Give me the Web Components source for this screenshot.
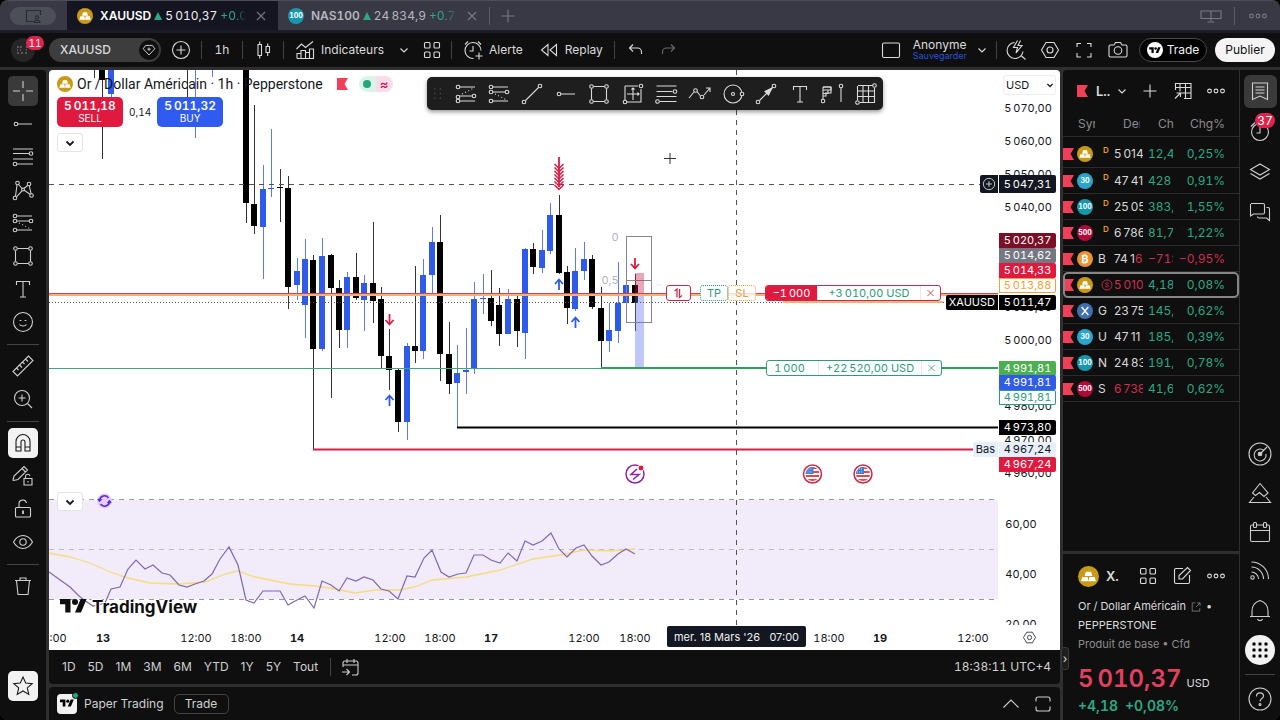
<!DOCTYPE html>
<html lang="fr">
<head>
<meta charset="utf-8">
<title>XAUUSD – TradingView</title>
<style>
  html, body { margin: 0; height: 100%; background: #000; }
  body { font-family: Inter, "Liberation Sans", sans-serif; font-variant-numeric: tabular-nums; color: #dbdbdb; font-size: 12px; line-height: 16px; }
</style>
</head>
<body>
<tv-app></tv-app>
<script>
const BASE = `<style>
  :host { box-sizing: border-box; display: block; }
  *, *::before, *::after { box-sizing: border-box; }
  button, select, input { font: inherit; font-variant-numeric: inherit; color: inherit; background: none; border: 0; padding: 0; margin: 0; }
  button { display: inline-flex; align-items: center; justify-content: center; flex: none; white-space: nowrap; }
  a { color: inherit; text-decoration: none; }
  .sep { flex: none; width: 1px; height: 18px; background: #434343; }
</style>`;
const define = (name, html, init) => {
  const tpl = document.createElement('template');
  tpl.innerHTML = BASE + html;
  customElements.define(name, class extends HTMLElement {
    connectedCallback() {
      if (this.shadowRoot) return;
      this.attachShadow({ mode: 'open' }).append(tpl.content.cloneNode(true));
      if (init) init.call(this, this.shadowRoot);
    }
  });
};
const o = (x, y, r = 1.8) => `<circle cx="${x}" cy="${y}" r="${r}"/>`;
const p = d => `<path d="${d}"/>`;
const ICONS = {
  cross: p('M12 2v7M12 15v7M2 12h7M15 12h7'),
  hray: o(5, 12) + p('M7 12h14'),
  fibs: p('M2 4h20M2 8.5h16M2 14h20M6 19h16') + o(20, 8.5) + o(4, 19),
  pattern: o(4, 20) + o(6.5, 5) + o(18, 6) + o(20.5, 17.5) + o(12, 11.5, 1.4) + p('M4.5 18L6 7M7.5 6.5L11 10.5M13 10.5l3.500-3M18.300 8l1.800 7.800M5.500 18.800l5.500-6M13.200 12.300l5.800 4'),
  proj: o(4, 5) + o(4, 10) + o(20, 10) + o(4, 19) + p('M6 5h15M6 10h12M6 19h15') + '<path d="M8 12l12 6" stroke-dasharray="1 2.500"/>',
  proj2: o(4, 5) + o(4, 15) + o(20, 14) + o(4, 19) + p('M6 5h15M6 14h12M6 19h15') + '<path d="M8 12l12-6" stroke-dasharray="1 2.500"/>',
  rect: o(4.500, 4.500) + o(19.500, 4.500) + o(4.500, 19.500) + o(19.500, 19.500) + p('M6.500 4.500h11M6.500 19.500h11M4.500 6.500v11M19.500 6.500v11'),
  text: p('M5.500 8V4.500h13V8M12 4.500v15.500M9 20h6'),
  smile: o(12, 12, 9.500) + p('M8.500 14.500c1.500 2 5.500 2 7 0') + '<path d="M9.500 10v1M14.500 10v1" stroke-width="1.800"/>',
  ruler: p('M2 17.500L17.500 2l4.500 4.500L6.500 22zM5.500 14l2 2M8.500 11l2.500 2.500M11.500 8l2 2M14.500 5l2.500 2.500'),
  zoom: o(11, 11, 7.500) + p('M16.500 16.500L21 21M11 7.500v7M7.500 11h7'),
  magnet: p('M5 20V10.500a7 7 0 0 1 14 0V20h-5v-9a2 2 0 0 0-4 0v9zM5 16h5M14 16h5'),
  penlock: p('M2 16l1-4L13 2.500l3.500 3.500L7 15.500l-4.500 1zM11 4.500L14.500 8M13 14.500h8v6.500h-8zM14.500 14.500v-2a2.300 2.300 0 0 1 4.500-.6M17 17v1.500'),
  lock: p('M5.500 10.500h13a1 1 0 0 1 1 1V19a1 1 0 0 1-1 1h-13a1 1 0 0 1-1-1v-7.500a1 1 0 0 1 1-1zM8 10.500V7a3.800 3.800 0 0 1 7.500-1') + '<path d="M12 13.500v3.500" stroke-width="1.800"/>',
  eye: p('M2.500 12C5 7.500 8.500 5.500 12 5.500s7 2 9.500 6.500c-2.500 4.500-6 6.500-9.500 6.500S5 16.500 2.500 12z') + o(12, 12, 3.200),
  trash: p('M4 6.500h16M9 6.500V4h6v2.500M5.500 6.500l1.500 14h10l1.500-14'),
  star: p('M12 3l2.700 6 6.500.6-4.900 4.300 1.500 6.500L12 17l-5.800 3.400 1.500-6.500-4.900-4.300 6.500-.6z'),
  line: o(4, 20) + o(20, 4) + p('M5.500 18.500l13-13'),
  range: p('M4 4h13M4 4v14M6 20h14V7M12 6v12M6 12h12M10.500 7.500L12 6l1.500 1.500M16.500 10.500L18 12l-1.500 1.500') + o(20, 4) + o(4, 20),
  fib2: p('M2.500 4h20M2.500 9.500h16M2.500 14.500h20M6 19.500h16.500') + o(21, 9.500) + o(3.500, 19.500),
  wave: p('M2 16l5-6M10 9.500l3 4M17 13l6-7M19 6h4v4') + o(8.500, 8.500) + o(15, 15),
  circ: o(12, 12, 9) + o(12, 12, 1.500) + '<circle cx="21" cy="12" r="1.800" fill="#1e1e1e"/>',
  arrow: o(4, 20) + o(20, 4) + p('M5.500 18.500L18.500 5.500') + '<path d="M18 6l-7 3.500 3.500 3.500z" fill="currentColor"/>',
  profile: p('M2 5v12.500M2 5h8v3H2M2 8h5v3.500H2M2 11.500h3V14H2') + p('M2 5h8M10 5v6H4') + o(2, 19) + p('M20 6v14') + o(20, 4),
  table: p('M4 3.500h14.500M3.500 4v14M6 20.500h14.500V6M3.500 9h17M3.500 14.500h17M9 3.500v17M14.500 3.500v17') + o(20.500, 3.500) + o(3.500, 20.500),
  plusc: o(12, 12, 8.500) + p('M12 7.500v9M7.500 12h9'),
  candle: p('M7 6.500h3.500v11H7zM8.700 3.500v3M8.700 17.500v3M15 8.500h3.500v6H15zM16.700 5.500v3M16.700 14.500V18'),
  indic: p('M4 20.500v-5h4v5M8 20.500v-8h4.500v8M12.500 20.500v-6h4v6M16.500 20.500V11h4v9.500zM4 20.500h16M3.500 11l5-5 4 3.500L20 3.500'),
  chev: p('M8.500 10.500l3.500 3.500 3.500-3.500'),
  chevb: '<path d="M8.500 10.500l3.500 3.500 3.500-3.500" stroke-width="1.800"/>',
  up: p('M4.500 15.500L12 8l7.500 7.500'),
  grid: '<rect x="4.500" y="4.500" width="5.500" height="5.500" rx="1"/><rect x="14" y="4.500" width="5.500" height="5.500" rx="1"/><rect x="4.500" y="14" width="5.500" height="5.500" rx="1"/><rect x="14" y="14" width="5.500" height="5.500" rx="1"/>',
  alarm: p('M20 12.500a8 8 0 1 0-7.500 8M12 8v5H8.500M4 6.500l3-3M17 3.500l3 3M18 14.500v7M14.500 18h7'),
  clock: p('M3 7.500l4-4M17 3.500l4 4M12 8v6H8.500') + o(12, 13, 8.500),
  replay: p('M11 6.500v11L4.500 12zM19.500 6.500v11L13 12z'),
  undo: p('M10 6.500L6.500 10l3.500 3.500M6.500 10h8a4 4 0 0 1 4 4v2'),
  redo: p('M14 6.500l3.500 3.500-3.500 3.500M17.500 10h-8a4 4 0 0 0-4 4v2'),
  layout: '<rect x="3.500" y="5" width="17" height="14.500" rx="1.500"/>',
  flash: p('M10.500 4.500a8 8 0 1 0 8.500 9M17 17.500l4.500 4M13.500 2.500l-4 7h4L12 15l6-7.500h-4l2.500-5'),
  hex: p('M8 4.500h8l4.500 7.500-4.500 7.500H8L3.500 12z') + o(12, 12, 3),
  full: p('M5 9V5.500h4M15 5.500h4V9M19 15v4h-4M9 19H5v-4'),
  maxi: p('M5 9.500V7a2 2 0 0 1 2-2h10a2 2 0 0 1 2 2v2.500M5 14.500V17a2 2 0 0 0 2 2h10a2 2 0 0 0 2-2v-2.500'),
  cam: p('M4.500 7H8l1.500-2.500h5L16 7h3.500A1.500 1.500 0 0 1 21 8.500v9a1.500 1.500 0 0 1-1.500 1.500h-15A1.500 1.500 0 0 1 3 17.500v-9A1.500 1.500 0 0 1 4.500 7z') + o(12, 12.500, 3.800),
  gem: p('M8 6.500h8l3 4L12 18l-7-7.500zM12 9v4M10 11h4'),
  x: p('M8 8l8 8M16 8l-8 8'),
  plus: p('M12 5.500v13M5.500 12h13'),
  dots: o(5.500, 12, 1.900) + o(12, 12, 1.900) + o(18.500, 12, 1.900),
  screen: p('M2 7h20v7.500H2zM12 7v10M8.500 18h7'),
  window: p('M12 17.500H5.500v-11h14V11M13 18.500c0-3 6-3 6 0z') + o(16, 13.500, 1.600),
  addtab: p('M4.500 11V4.500H20v15h-7M4.500 8.500H20M9 4.500v8M14.500 4.500v15M9 14H20M4 19.500l5-5M5.500 14H9.500v4'),
  note: p('M4.500 4h15v16.500L12 17l-7.500 3.500zM7.500 8h9M7.500 11h9M7.500 14h9'),
  layers: p('M12 5l9.500 5.500L12 16 2.500 10.500zM2.500 14.500L12 20l9.500-5.500'),
  chat: p('M3 4.500h12a1.500 1.500 0 0 1 1.500 1.500v7.500a1.500 1.500 0 0 1-1.500 1.500H5.500L2.500 17V5M18.500 8.500h1.500a1.500 1.500 0 0 1 1.500 1.500v11.500L18.500 19H11a1.500 1.500 0 0 1-1.500-1.500'),
  radar: o(12, 12, 11) + p('M16 8.500A6 6 0 1 0 18 12M13 11l6-6') + '<circle cx="12" cy="12" r="1.800" fill="currentColor"/>',
  idea: p('M12 2.500l8 9.500-4 3.500-4.500-4-4 3L4.500 12zM6 16l-4.500 5.500h21L18 16'),
  cal: p('M3.500 5H20a1.500 1.500 0 0 1 1.500 1.500V20a1.500 1.500 0 0 1-1.500 1.500H4A1.500 1.500 0 0 1 2.500 20V6.500A1.500 1.500 0 0 1 4 5M2.500 10.500h19') + '<rect x="5.500" y="2.500" width="3" height="5" rx="1" fill="#0f0f0f"/><rect x="15.500" y="2.500" width="3" height="5" rx="1" fill="#0f0f0f"/>',
  goto: p('M5 12V8a2 2 0 0 1 2-2h11a2 2 0 0 1 2 2v10a2 2 0 0 1-2 2h-4M5 10h15M9 4v4M16 4v4M4 17h7M8.500 14l3 3-3 3'),
  rss: o(4.500, 18.500, 1.700) + p('M3.500 13a7 7 0 0 1 7 7M3.500 8a12 12 0 0 1 12 12M3.500 3a17 17 0 0 1 17 17'),
  bell: p('M4 18V13c0-5.500 3.500-9 8-10.500 4.500 1.500 8 5 8 10.500v5M2 18.500h20M9.500 21a2.700 2.700 0 0 0 5 0'),
  help: o(12, 12, 11) + p('M8.500 9.500c0-5 7-4.500 7-.5 0 2.500-3.500 2.500-3.500 5.500') + o(12, 17.500, 1),
  apps: [6, 12, 18].map(y => [6, 12, 18].map(x => `<rect x="${x - 1.500}" y="${y - 1.500}" width="3" height="3" rx=".6" fill="currentColor" stroke="none"/>`).join('')).join(''),
  edit: p('M13 4.500H6A1.500 1.500 0 0 0 4.500 6v12A1.500 1.500 0 0 0 6 19.500h12a1.500 1.500 0 0 0 1.500-1.500v-7M9 15v-3.500l8.500-8 3 3-8 8.500z'),
  ext: p('M11 5H5.500v14h13v-5M14 5h5v5M19 5l-7 7'),
  stop: '<g stroke-width="1.800">' + o(12, 12, 10) + '<path d="M15 9c-1-2-6-2-6 .5s6 2 6 4.500-5 2.500-6.500.5"/></g>',
  avatar: '<path d="M6 9h2M9 9h2M15 9h2M6 12h1M9 12h1M15 12h1M6 15h2M10 15h2M14 15h2" stroke="#6c6c6c" stroke-width="1.500"/>',
  grip: [7, 12, 17].map(y => [8, 14].map(x => `<rect x="${x}" y="${y - 1}" width="1" height="1" fill="#777" stroke="none"/>`).join('')).join('')
};
define('tv-icon', `<style>:host { display: inline-block; flex: none; width: 24px; height: 24px; } svg { display: block; width: 100%; height: 100%; fill: none; stroke: currentColor; stroke-width: 1.1; }</style><svg viewBox="0 0 24 24" aria-hidden="true"></svg>`,
  function (r) { r.querySelector('svg').innerHTML = ICONS[this.getAttribute('name')]; });

define('tv-logo', `<style>:host { display: inline-block; flex: none; width: 18px; height: 14px; } svg { display: block; width: 100%; height: 100%; fill: currentColor; }</style>
<svg viewBox="0 0 36 28" aria-hidden="true"><path d="M14 22H7V11H0V4h14v18zM28 22h-8l7.500-18h8L28 22z"/><circle cx="20" cy="8" r="4"/></svg>`);

const BADGE = {
  gold: ['#c99a15', '<path d="M9 6.500h6l1.500 5h-9zM5 12.500h6l1 5H3.500zM13 12.500h6l1.500 5H12z" fill="#fff"/>'],
  btc: ['#ec9331', '₿'], gbp: ['#3f6fb0', '<path d="M7 6l10 12M17 6L7 18" stroke="#fff" stroke-width="2"/>'],
  30: ['#2ca5cc', '30'], 100: ['#1797ae', '100'], 500: ['#b1093a', '500']
};
define('sym-badge', `<style>
  :host { display: inline-flex; flex: none; align-items: center; justify-content: center; width: 16px; height: 16px; border-radius: 50%; color: #fff; font-size: 7px; line-height: 8px; font-weight: 700; }
  :host([kind=btc]) { font-size: 11px; }
  span { display: flex; align-items: center; justify-content: center; width: 100%; height: 100%; }
  svg { display: block; width: 100%; height: 100%; }
</style><span></span>`, function (r) {
  const [bg, art] = BADGE[this.getAttribute('kind')];
  this.style.background = bg;
  r.querySelector('span').innerHTML = art[0] === '<' ? `<svg viewBox="0 0 24 24" aria-hidden="true">${art}</svg>` : art;
});
define('red-flag', `<style>:host { display: inline-block; flex: none; width: 11px; height: 12px; } svg { display: block; }</style><svg width="11" height="12" aria-hidden="true"><path d="M0 0h11L7.500 6 11 12H0z" fill="#f23f57"/></svg>`);

/* Window tabs */
define('tv-tabs', `<style>
  :host { display: flex; align-items: stretch; height: 33px; background: #383944; border-top: 1px solid #4b4d59; border-bottom: 3px solid #1b1c28; border-radius: 8px 8px 0 0; padding-right: 10px; }
  .home { align-self: center; width: 46px; height: 18px; border-radius: 9px; background: #4c4e58; color: #292a34; margin: 0 11px 0 10px; }
  .tab { display: flex; align-items: center; gap: 3px; width: 211px; padding-left: 10px; color: #b5b6bd; white-space: nowrap; }
  .tab.on { background: #141520; color: #f0f0f0; }
  .tab b { font-weight: 600; margin-left: 4px; }
  .tab.on b { color: #fff; }
  .tab i { width: 0; height: 0; border: 4px solid transparent; border-top: 0; border-bottom: 8px solid #2ba987; }
  .chg { color: #2ba987; width: 35px; overflow: hidden; -webkit-mask-image: linear-gradient(90deg, #000 60%, transparent); mask-image: linear-gradient(90deg, #000 60%, transparent); }
  .x, .end { color: #777986; }
  .x { margin: 0 5px 0 auto; }
  .sep { align-self: center; background: #5a5c68; }
  .end { display: flex; align-items: center; gap: 11px; margin-left: auto; }
  .add { color: #777986; margin-left: 6px; }
</style>
<button class="home" aria-label="Fenêtres"><tv-icon name="window"></tv-icon></button>
<div class="tab on"><sym-badge kind="gold"></sym-badge><b>XAUUSD</b><i></i><span>5\u2009010,37</span><span class="chg">+0.08</span><button class="x" aria-label="Fermer"><tv-icon name="x"></tv-icon></button></div>
<div class="tab"><sym-badge kind="100"></sym-badge><b>NAS100</b><i></i><span>24\u2009834,9</span><span class="chg">+0.78</span><button class="x" aria-label="Fermer"><tv-icon name="x"></tv-icon></button></div>
<span class="sep"></span><button class="add" aria-label="Nouvel onglet"><tv-icon name="plus"></tv-icon></button>
<div class="end"><tv-icon name="screen"></tv-icon><span class="sep"></span><tv-icon name="dots"></tv-icon></div>`);

/* Top toolbar */
define('tv-topbar', `<style>
  :host { display: flex; align-items: center; height: 34px; background: #0f0f0f; padding-right: 5px; }
  button { height: 32px; }
  .me { position: relative; width: 46px; margin-right: 3px; }
  .me span { display: flex; align-items: center; justify-content: center; width: 24px; height: 24px; border-radius: 50%; background: #262626; }
  .me em { position: absolute; top: 2px; left: 26px; min-width: 18px; height: 14px; border-radius: 7px; background: #e0234a; color: #fff; font-style: normal; font-size: 10px; line-height: 14px; }
  .sym { width: 112px; height: 24px; border-radius: 12px; background: #3d3d3d; justify-content: space-between; padding: 0 2px 0 11px; font-weight: 500; }
  .sym span { width: 20px; height: 20px; border-radius: 50%; background: #0f0f0f; display: flex; align-items: center; justify-content: center; }
  .sym tv-icon { width: 20px; height: 20px; }
  .w40 { width: 40px; } .w34 { width: 34px; } .w32 { width: 32px; }
  .lab { gap: 4px; padding: 0 8px 0 6px; }
  .first { padding-left: 9px; }
  .gap { margin: 0 3px; }
  .dim { color: #6b6b6b; }
  .name { flex-direction: column; align-items: flex-start; line-height: 12px; margin: 0 3px 0 10px; }
  .name small { color: #2a51d8; font-size: 9px; line-height: 10px; }
  .right .sep { margin: 0 2px; }
  .trade { height: 24px; width: 68px; border: 1px solid #4a4a4a; border-radius: 12px; background: #000; gap: 4px; margin: 0 8px 0 4px; color: #f0f0f0; }
  .trade span { display: flex; align-items: center; justify-content: center; width: 16px; height: 16px; border-radius: 50%; background: #fff; color: #000; }
  .trade tv-logo { width: 12px; height: 9px; }
  .pub { height: 24px; width: 60px; border-radius: 12px; background: #f4f4f4; color: #0f0f0f; }
  .right { display: flex; align-items: center; margin-left: auto; }
</style>
<button class="me" aria-label="Menu"><span><tv-icon name="avatar"></tv-icon></span><em>11</em></button>
<button class="sym">XAUUSD<span><tv-icon name="gem"></tv-icon></span></button>
<button class="w40" aria-label="Comparer"><tv-icon name="plusc"></tv-icon></button><span class="sep"></span>
<button class="w40">1h</button><span class="sep"></span>
<button class="w40" aria-label="Bougies"><tv-icon name="candle"></tv-icon></button><span class="sep"></span>
<button class="lab first"><tv-icon name="indic"></tv-icon>Indicateurs</button>
<button aria-label="Favoris"><tv-icon name="chev"></tv-icon></button>
<button class="w32" aria-label="Modèles"><tv-icon name="grid"></tv-icon></button><span class="sep gap"></span>
<button class="lab"><tv-icon name="alarm"></tv-icon>Alerte</button>
<button class="lab"><tv-icon name="replay"></tv-icon>Replay</button><span class="sep gap"></span>
<button class="w34" aria-label="Annuler"><tv-icon name="undo"></tv-icon></button>
<button class="w34 dim" aria-label="Rétablir"><tv-icon name="redo"></tv-icon></button>
<div class="right">
<button aria-label="Disposition"><tv-icon name="layout"></tv-icon></button>
<button class="name"><span>Anonyme</span><small>Sauvegarder</small></button>
<button aria-label="Gérer"><tv-icon name="chev"></tv-icon></button><span class="sep"></span>
<button class="w34" aria-label="Recherche rapide"><tv-icon name="flash"></tv-icon></button>
<button class="w34" aria-label="Paramètres"><tv-icon name="hex"></tv-icon></button>
<button class="w34" aria-label="Plein écran"><tv-icon name="full"></tv-icon></button>
<button class="w34" aria-label="Capture"><tv-icon name="cam"></tv-icon></button>
<button class="trade"><span><tv-logo></tv-logo></span>Trade</button>
<button class="pub">Publier</button></div>`);

/* Left drawing tools */
define('tv-tools', `<style>
  :host { display: flex; flex-direction: column; align-items: center; background: #0f0f0f; padding: 5px 0 17px; border-radius: 0 4px 0 8px; color: #cfcfcf; }
  button { width: 30px; height: 30px; margin: 1px 0 2px; border-radius: 5px; }
  .on { background: #3a3a3a; } .lit { background: #f2f2f2; color: #1a1a1a; }
  hr { width: 32px; height: 1px; margin: 5px 0; border: 0; background: #434343; }
  .last { margin-top: auto; }
</style>
<button class="on" aria-label="Réticule"><tv-icon name="cross"></tv-icon></button><button aria-label="Lignes"><tv-icon name="hray"></tv-icon></button><button aria-label="Fibonacci"><tv-icon name="fibs"></tv-icon></button><button aria-label="Modèles"><tv-icon name="pattern"></tv-icon></button><button aria-label="Projection"><tv-icon name="proj"></tv-icon></button><button aria-label="Formes"><tv-icon name="rect"></tv-icon></button><button aria-label="Texte"><tv-icon name="text"></tv-icon></button><button aria-label="Icônes"><tv-icon name="smile"></tv-icon></button>
<hr><button aria-label="Mesure"><tv-icon name="ruler"></tv-icon></button><button aria-label="Zoom"><tv-icon name="zoom"></tv-icon></button>
<hr><button class="lit" aria-label="Aimant"><tv-icon name="magnet"></tv-icon></button><button aria-label="Mode dessin"><tv-icon name="penlock"></tv-icon></button><button aria-label="Verrouiller"><tv-icon name="lock"></tv-icon></button><button aria-label="Masquer"><tv-icon name="eye"></tv-icon></button>
<hr><button aria-label="Supprimer"><tv-icon name="trash"></tv-icon></button>
<button class="lit last" aria-label="Favoris"><tv-icon name="star"></tv-icon></button>`);

/* Floating favourites */
define('tv-favs', `<style>
  :host { display: flex; align-items: center; width: 456px; height: 33px; border-radius: 5px; background: #1e1e1e; color: #dbdbdb; box-shadow: 0 2px 4px rgba(0,0,0,.4); }
  .list { flex: 1; display: grid; grid-template-columns: repeat(13, 1fr); justify-items: center; }
  button { height: 24px; }
  tv-icon[name=grip] { width: 22px; }
</style><tv-icon name="grip"></tv-icon><div class="list"></div>`, function (r) {
  r.querySelector('.list').innerHTML = ['proj2', 'proj', 'line', 'hray', 'rect', 'range', 'fib2', 'wave', 'circ', 'arrow', 'text', 'profile', 'table']
    .map(n => `<button aria-label="Outil ${n}"><tv-icon name="${n}"></tv-icon></button>`).join('');
});

/* Price-scale label, placed at its price */
define('price-tag', `<style>
  :host { position: absolute; right: 4px; display: flex; height: 15px; line-height: 15px; font-size: 11px; color: #fff; }
  span { display: block; text-align: center; background: var(--c, #000); }
  .v { width: 57px; border-radius: 0 2px 2px 0; }
  .n { padding: 0 3px; margin-right: 1px; border-radius: 2px 0 0 2px; }
  :host([outline]) .v { background: #fff; box-shadow: inset 0 0 0 1px var(--c); color: var(--c); }
  :host([light]) { color: #131722; }
  :host([tall]) { height: 18px; line-height: 18px; }
  :host([tall]) .n { padding: 0 1px; }
  tv-icon { display: block; width: 16px; height: 18px; }
</style><span class="n"></span><span class="v"><slot></slot></span>`, function (r) {
  const n = r.querySelector('.n');
  if (this.hasAttribute('name')) n.textContent = this.getAttribute('name');
  else if (this.hasAttribute('tall')) n.innerHTML = '<tv-icon name="plusc"></tv-icon>';
  else n.remove();
});

/* Chart: [x, wickTop, bodyTop, bodyBottom, wickBottom, up] */
const CANDLES = [[94,60,60,61,78,0],[102,60,60,80,159,0],[111,60,60,94,97,1],[187,60,60,61,98,0],[195,60,60,61,138,1],[212,60,60,61,77,1],
[246,60,60,203,223,0],[254,105,204,226,234,0],[263,165,189,227,279,1],[271,129,188,189,197,1],[280,169,187,188,222,0],[288,176,188,287,309,0],[297,258,271,285,300,1],[305,239,259,305,338,1],[313,255,260,349,450,0],[322,238,256,349,351,1],[331,254,255,288,398,0],[339,280,288,330,348,0],[347,272,277,330,348,1],[356,253,277,298,300,0],[364,275,283,300,331,1],[373,222,283,301,323,0],[381,287,299,356,368,0],[389,329,356,370,390,0],[398,368,370,422,432,0],[407,343,346,422,440,1],[415,266,346,351,363,0],[423,259,275,351,359,1],[432,227,242,275,295,1],[440,215,242,354,381,0],[449,322,354,384,394,0],[457,345,373,383,427,1],[466,328,370,372,394,1],[474,282,299,368,374,1],[483,274,298,299,314,1],[491,270,298,321,326,0],[499,288,305,334,346,0],[508,289,299,334,334,1],[517,294,299,331,347,0],[525,248,249,333,359,1],[533,243,249,267,274,0],[542,230,250,268,273,1],[550,203,215,251,254,1],[559,195,215,273,274,0],[567,266,272,308,324,0],[575,248,271,309,311,1],[584,242,259,271,280,1],[592,255,259,307,309,0],[601,287,308,341,367,0],[609,303,330,341,352,1],[618,262,303,331,343,1],[626,237,285,303,322,1],[635,274,285,303,331,0]];
const RSI = '49,572 70,587 79,596 84,600 93,606 105,603 111,589 120,587 128,569 136,560 145,569 153,565 162,573 170,575 179,585 187,587 195,584 204,581 212,574 220,559 229,547 238,565 246,600 254,603 263,591 280,591 288,605 297,600 305,596 314,608 322,581 331,585 339,591 347,578 356,581 364,577 373,580 381,589 389,591 398,599 407,576 415,577 424,558 432,550 441,572 449,577 458,574 466,573 474,555 483,555 491,560 500,563 508,553 517,561 525,541 533,545 542,541 551,533 559,549 567,557 576,548 584,545 592,556 601,565 609,562 618,554 626,549 635,554';
const MA = '49,553 70,557 90,563 110,572 128,578 150,583 180,584 205,582 225,574 238,571 255,577 290,584 315,586 330,588 355,593 375,590 400,590 418,586 432,580 466,577 500,570 533,559 560,555 584,550 610,551 635,549';
const down = (x, y) => `<path d="M${x} ${y}v11m-4-5l4 4.500 4-4.500" stroke="#d81e45" stroke-width="1.800"/>`;
const upA = (x, y) => `<path d="M${x} ${y}v-11m-4 5l4-4.500 4 4.500" stroke="#2f5bea" stroke-width="1.800"/>`;
const usa = x => `<circle cx="${x}" cy="474" r="9" fill="#fff" stroke="#c92a4b" stroke-width="1.500"/><clipPath id="u${x}"><circle cx="${x}" cy="474" r="7"/></clipPath><g clip-path="url(#u${x})"><path d="M${x - 8} 468h16M${x - 8} 472h16M${x - 8} 476h16M${x - 8} 480h16" stroke="#e0474f" stroke-width="2"/><rect x="${x - 8}" y="466" width="9" height="8" fill="#3f7fd0"/><path d="M${x - 6} 469h6M${x - 6} 472h6" stroke="#fff" stroke-width="1" stroke-dasharray="1 1" opacity=".7"/></g>`;

define('tv-chart', `<style>
  :host { position: relative; display: grid; grid-template: minmax(0, 1fr) 25px / minmax(0, 1fr) 62px; background: #fff; color: #131722; border-radius: 4px 4px 0 0; overflow: hidden; }
  svg { display: block; width: 100%; height: 100%; fill: none; }
  svg text { font-size: 11px; fill: #131722; text-anchor: middle; }
  .time { grid-column: 1; }
  .bold { font-weight: 700; }
  .over { position: absolute; display: flex; align-items: center; }
  .legend { top: 6px; left: 8px; gap: 4px; font: 14px/16px Roboto, sans-serif; }
  .legend red-flag { margin-left: 10px; }
  .state { display: flex; margin-left: 7px; height: 16px; border-radius: 8px; overflow: hidden; font: 600 13px/15px Inter, sans-serif; color: #c2185b; }
  .state span { width: 17px; background: #dcf3ea; display: flex; align-items: center; justify-content: center; }
  .state span + span { background: #fbdcea; }
  .state i { width: 8px; height: 8px; border-radius: 50%; background: #22a67a; }
  .quote { top: 27px; left: 8px; gap: 6px; font-size: 10px; }
  .quote button { flex-direction: column; width: 66px; height: 30px; border-radius: 5px; background: #e0193f; color: #fff; line-height: 12px; }
  .quote button b { font-size: 12px; font-weight: 600; }
  .quote .buy { background: #2f5bf0; }
  .fold { left: 8px; width: 26px; height: 19px; border: 1px solid #e0e3eb; border-radius: 3px; background: #fff; }
  .favs { top: 7px; left: 378px; }
  .cur { top: 5px; right: 4px; width: 53px; height: 20px; }
  .cur select { width: 100%; height: 20px; padding-left: 2px; border: 1px solid #eceef3; border-radius: 3px; font-size: 11px; appearance: none; }
  .cur tv-icon { position: absolute; right: -3px; width: 18px; height: 18px; pointer-events: none; }
  .pill { height: 16px; background: #fff; border: 1px solid var(--c); border-radius: 3px; color: var(--c); font-size: 11px; line-height: 14px; overflow: hidden; }
  .pill span, .pill button { height: 14px; text-align: center; border-left: 1px solid #e8e8ea; }
  .pill :first-child { border-left: 0; width: 51px; }
  .pill span:first-child { padding-right: 6px; }
  .pill .q:first-child { padding: 0; }
  .pill span + span { width: 103px; }
  .pill button { width: 20px; }
  .pill tv-icon { width: 18px; height: 18px; }
  .short { --c: #c92a4b; top: 215px; left: 716px; }
  .short .q { background: #e0193f; color: #fff; }
  .short .p { color: #2d9c7a; }
  .long { --c: #2d9c7a; top: 290px; left: 717px; }
  .rev { --c: #c92a4b; top: 215px; left: 617px; width: 25px; justify-content: center; }
  .rev svg { width: 12px; height: 12px; }
  .tpsl { top: 215px; left: 651px; font-size: 11px; line-height: 14px; }
  .tpsl button { width: 28px; height: 16px; border: 1px dotted #2d9c7a; color: #2d9c7a; background: #fff; border-radius: 3px; }
  .tpsl button + button { border-color: #e3a13c; color: #e3a13c; background: #fffc; }
  .brand { left: 11px; bottom: 33px; gap: 5px; font-size: 17px; line-height: 20px; font-weight: 700; color: #0f0f0f; text-shadow: 0 0 2px #fff, 1px 1px 0 #fff, -1px -1px 0 #fff; }
  .brand tv-logo { width: 27px; height: 21px; }
  .when { left: 618px; bottom: 3px; height: 21px; width: 139px; justify-content: center; background: #131722; color: #eee; font-size: 11px; font-variant-numeric: normal; border-radius: 2px; white-space: pre; }
  .set { right: 22px; bottom: 0; height: 25px; } .set tv-icon { width: 17px; height: 17px; }
</style>
<svg class="plot" role="img" aria-label="Graphique en bougies XAUUSD"><g transform="translate(-49 -70)"></g></svg>
<svg class="axis" aria-label="Échelle des prix"></svg>
<svg class="time" aria-label="Échelle de temps"></svg>
<div class="over legend"><sym-badge kind="gold"></sym-badge><span>Or / Dollar Américain · 1h · Pepperstone</span><red-flag></red-flag><div class="state"><span><i></i></span><span>≈</span></div></div>
<div class="over quote"><button><b>5\u2009011,18</b>SELL</button><span>0,14</span><button class="buy"><b>5\u2009011,32</b>BUY</button></div>
<button class="over fold" style="top:63px" aria-label="Replier"><tv-icon name="chevb"></tv-icon></button>
<button class="over fold" style="top:422px" aria-label="Replier RSI"><tv-icon name="chevb"></tv-icon></button>
<div class="over cur"><select aria-label="Devise"><option>USD</option></select><tv-icon name="chevb"></tv-icon></div>
<button class="over pill rev" aria-label="Inverser"><svg viewBox="0 0 12 12" stroke="currentColor" stroke-width="1.300"><path d="M2 4l2.500-2v8.500M7 2v8.500l2.500-2"/></svg></button>
<div class="over tpsl"><button>TP</button><button>SL</button></div>
<div class="over pill short"><span class="q">−1\u2009000</span><span class="p">+3\u2009010,00 USD</span><button aria-label="Fermer"><tv-icon name="x"></tv-icon></button></div>
<div class="over pill long"><span>1\u2009000</span><span>+22\u2009520,00 USD</span><button aria-label="Annuler"><tv-icon name="x"></tv-icon></button></div>
<price-tag tall style="top:105px;--c:#131722">5\u2009047,31</price-tag>
<price-tag style="top:163px;--c:#7b0f28">5\u2009020,37</price-tag>
<price-tag style="top:178px;--c:#757883">5\u2009014,62</price-tag>
<price-tag style="top:193px;--c:#e0193f">5\u2009014,33</price-tag>
<price-tag outline style="top:208px;--c:#eca33b">5\u2009013,88</price-tag>
<price-tag name="XAUUSD" style="top:225px">5\u2009011,47</price-tag>
<price-tag style="top:291px;--c:#4caf50">4\u2009991,81</price-tag>
<price-tag style="top:305px;--c:#2f5bea">4\u2009991,81</price-tag>
<price-tag outline style="top:320px;--c:#2d9c7a">4\u2009991,81</price-tag>
<price-tag style="top:350px">4\u2009973,80</price-tag>
<price-tag light name="Bas" style="top:372px;--c:#e6effa">4\u2009967,24</price-tag>
<price-tag style="top:387px;--c:#e0193f">4\u2009967,24</price-tag>
<div class="over brand"><tv-logo></tv-logo>TradingView</div>
<div class="over when">mer. 18 Mars '26   07:00</div>
<button class="over set" aria-label="Réglages"><tv-icon name="hex"></tv-icon></button>
<tv-favs class="over favs"></tv-favs>`, function (r) {
  const W = 2400;
  const hl = (y, x, c, w = 1, dash = '') => `<path d="M${x} ${y}H${W}" stroke="${c}" stroke-width="${w}" stroke-dasharray="${dash}"/>`;
  let g = `<rect x="49" y="500" width="${W}" height="99" fill="#f2ebf9"/>`
    + hl(499.5, 49, '#9598a1', 1, '5 5') + hl(549.5, 49, '#bdb9c8', 1, '5 5') + hl(599.5, 49, '#9598a1', 1, '5 5')
    + `<polyline points="${MA}" stroke="#f5dc7c" stroke-width="1.300"/><polyline points="${RSI}" stroke="#8168b3" stroke-width="1.200"/>`;
  for (const [x, wt, bt, bb, wb, up] of CANDLES) {
    const c = up ? '#2f5bea' : '#000';
    g += `<rect x="${x}" y="${wt}" width="1" height="${wb - wt}" fill="${c}" opacity=".8"/><rect x="${x - 3}" y="${bt}" width="6" height="${Math.max(1, bb - bt)}" fill="${c}"/>`;
  }
  g += '<rect x="626.500" y="236.500" width="25" height="86" stroke="#85878f"/><path d="M627 280.500h25" stroke="#85878f"/>'
    + '<rect x="635" y="273" width="9" height="20" fill="#c9244d" opacity=".4"/><rect x="635" y="293" width="9" height="75" fill="#5b76f0" opacity=".4"/>'
    + '<text x="615" y="241" style="fill:#b2b5be">0</text><text x="610" y="284" style="fill:#b2b5be">0,5</text>'
    + hl(294.5, 49, '#f0b27a', 3) + hl(293.5, 49, '#d8405a') + hl(302.5, 49, '#555', 1, '1 2') + '<path d="M783 302h160" stroke="#f0b27a" stroke-width="2"/>' + hl(368.5, 49, '#3ba684')
    + hl(368, 601, '#2da05c', 2) + hl(427.500, 457, '#000', 2) + hl(449.500, 313, '#d81e45', 2)
    + hl(184.5, 49, '#50535e', 1, '5 5') + '<path d="M736.500 70V625" stroke="#50535e" stroke-dasharray="5 5"/>'
    + down(389.5, 314) + down(635, 258) + upA(389.5, 406) + upA(559, 290) + upA(575.5, 328)
    + '<path d="M559 157v30" stroke="#d81e45" stroke-width="1.800"/>'
    + [0, 1, 2, 3, 4, 5, 6].map(i => `<path d="M554.500 ${164 + i * 3.5}l4.500 4.500 4.500-4.500" stroke="#d81e45" stroke-width="1.500"/>`).join('')
    + '<path d="M670 153v11M664 158.500h12" stroke="#333"/>'
    + usa(812.5) + usa(863)
    + '<circle cx="635" cy="474" r="9" stroke="#8b27a6" stroke-width="1.500" fill="#fff"/><path d="M637 469l-6 5.500h8l-6 5" stroke="#8b27a6" stroke-width="1.600"/><circle cx="641" cy="468" r="3" fill="#e0193f" stroke="#fff"/>'
    + '<circle cx="104.500" cy="501" r="7.500" fill="#e4cffb"/><path d="M99.500 500a5 5 0 0 1 9-2M109.500 502a5 5 0 0 1-9 2M98 499l1.500 2 2-2M107.500 503l2-2 1.500 2" stroke="#5f2bd0" stroke-width="1.500"/>';
  r.querySelector('.plot g').innerHTML = g;
  r.querySelector('.axis').innerHTML = [['5\u2009070,00', 38], ['5\u2009060,00', 71], ['5\u2009050,00', 104], ['5\u2009040,00', 137], ['5\u2009010,00', 237], ['5\u2009000,00', 270], ['4\u2009980,00', 336], ['4\u2009970,00', 370], ['4\u2009960,00', 403], ['60,00', 454], ['40,00', 504], ['20,00', 554]]
    .map(([t, y]) => `<text x="${t.length < 6 ? 23 : 30}" y="${y + 4}">${t}</text>`).join('');
  r.querySelector('.time').innerHTML = [['18:00', 2], ['13', 54, 1], ['12:00', 147], ['18:00', 197], ['14', 248, 1], ['12:00', 341], ['18:00', 391], ['17', 442, 1], ['12:00', 535], ['18:00', 586], ['18:00', 780], ['19', 831, 1], ['12:00', 924]]
    .map(([t, x, b]) => `<text x="${x}" y="17"${b ? ' class="bold"' : ''}>${t}</text>`).join('');
});

/* Date range bar and broker bar */
define('tv-range-list', `<style>:host { display: flex; gap: 11px; font-variant-numeric: normal; }</style>`, function (r) {
  for (const t of this.getAttribute('items').split(' ')) { const b = document.createElement('button'); b.textContent = t; r.append(b); }
});
define('tv-bottom', `<style>
  :host { display: flex; flex-direction: column; gap: 3px; color: #cfcfcf; }
  .bar { display: flex; align-items: center; height: 34px; background: #0f0f0f; border-radius: 0 0 4px 4px; padding: 0 9px 0 13px; }
  .bar + .bar { height: 33px; border-radius: 4px 4px 0 0; padding: 0 5px 0 8px; }
  .sep { margin: 0 7px 0 12px; }
  tv-range-list { gap: 12px; }
  .end { margin-left: auto; display: flex; gap: 8px; }
  .acc { position: relative; gap: 7px; }
  .tile { display: flex; align-items: center; justify-content: center; width: 20px; height: 20px; border-radius: 4px; background: #f2f2f2; color: #000; }
  .tile tv-logo { width: 14px; height: 11px; }
  .acc i { position: absolute; left: 15px; top: -2px; width: 7px; height: 7px; border-radius: 50%; background: #22a67a; border: 1px solid #0f0f0f; }
  .trade { width: 55px; height: 20px; margin-left: 10px; border: 1px solid #434343; border-radius: 5px; }
</style>
<div class="bar"><tv-range-list items="1D 5D 1M 3M 6M YTD 1Y 5Y Tout"></tv-range-list><span class="sep"></span><button aria-label="Aller à"><tv-icon name="goto"></tv-icon></button><button class="end">18:38:11 UTC+4</button></div>
<div class="bar"><button class="acc"><span class="tile"><tv-logo></tv-logo></span><i></i>Paper Trading</button><button class="trade">Trade</button><div class="end"><button aria-label="Ouvrir"><tv-icon name="up"></tv-icon></button><button aria-label="Agrandir"><tv-icon name="maxi"></tv-icon></button></div></div>`);

/* Watchlist */
const ROWS = [['gold', '', 'D', '5\u2009014', '12,4', '0,25%'], ['30', '', 'D', '47\u200941', '428', '0,91%'], ['100', '', 'D', '25\u200905', '383,', '1,55%'], ['500', '', 'D', '6\u2009786', '81,7', '1,22%'], ['btc', 'B', '', '74\u20091<s>6</s>', '−71:', '−0,95%'], ['gold', '', 'S', '<s>5\u2009010</s>', '4,18', '0,08%'], ['gbp', 'G', '', '23\u200975', '145,', '0,62%'], ['30', 'U', '', '47\u200911', '185,', '0,39%'], ['100', 'N', '', '24\u200983', '191,', '0,78%'], ['500', 'S', '', '<s>6\u2009738</s>', '41,6', '0,62%']];
define('tv-watchlist', `<style>
  :host { background: #0f0f0f; border-radius: 4px 0 0 0; min-height: 0; overflow: hidden; }
  header { display: flex; align-items: center; height: 42px; padding: 0 11px 0 14px; }
  header b { font-size: 13px; font-weight: 600; margin-left: 8px; }
  header .pl { margin: 0 9px 0 auto; }
  header button:last-child { margin-left: 9px; }
  table { width: 100%; table-layout: fixed; border-collapse: collapse; font-size: 12px; }
  th { height: 24px; padding: 0; font-weight: 400; color: #8c8c8c; text-align: left; }
  td { height: 26px; padding: 0; white-space: nowrap; overflow: hidden; }
  tr { border-bottom: 1px solid #2b2b2b; }
  tbody::before { content: ""; display: block; height: 5px; }
  th div, td div { overflow: hidden; white-space: nowrap; }
  .s { display: flex; align-items: center; gap: 5px; height: 25px; }
  .s red-flag { overflow: hidden; margin-right: -2px; }
  .sup { color: #e69a2e; font-size: 8px; font-weight: 600; margin: -8px 0 0 5px; }
  .clo { color: #d02c4d; width: 12px; height: 12px; margin-left: 3px; }
  .l { width: 29px; color: #d6d6d6; font-variant-numeric: normal; }
  s { text-decoration: none; color: #d02c4d; }
  .c { width: 25px; } .p { padding-right: 14px; text-align: right; }
  .c, .p { color: #2ba987; } tr.neg .c, tr.neg .p { color: #d02c4d; }
  tr.neg .p { margin-left: -9px; }
  tr.neg td { overflow: visible; }
  .h1 { width: 17px; margin-left: 15px; } .h2 { width: 17px; margin-left: 9px; } .h3 { width: 16px; margin-left: 10px; }
  th .p { color: #8c8c8c; }
  tr.on { outline: 2px solid #868686; outline-offset: -2px; border-radius: 5px; }
</style>
<header><red-flag></red-flag><b>L..</b><button aria-label="Listes"><tv-icon name="chev"></tv-icon></button><button class="pl" aria-label="Ajouter"><tv-icon name="plus"></tv-icon></button><button aria-label="Tableau"><tv-icon name="addtab"></tv-icon></button><button aria-label="Plus"><tv-icon name="dots"></tv-icon></button></header>
<table><colgroup><col style="width:51px"><col style="width:34px"><col style="width:28px"><col></colgroup>
<thead><tr><th><div class="h1">Sym</div></th><th><div class="h2">Der</div></th><th><div class="h3">Ch</div></th><th><div class="p">Chg%</div></th></tr></thead><tbody></tbody></table>`, function (r) {
  const tail = (n, d) => n ? `<span>${n}</span>` : d === 'D' ? '<span class="sup">D</span>' : '<tv-icon class="clo" name="stop"></tv-icon>';
  r.querySelector('tbody').innerHTML = ROWS.map(([k, n, d, l, c, pc], i) => `<tr class="${i === 4 ? 'neg' : i === 5 ? 'on' : ''}"><td><div class="s"><red-flag></red-flag><sym-badge kind="${k}"></sym-badge>${tail(n, d)}</div></td><td><div class="l">${l}</div></td><td><div class="c">${c}</div></td><td><div class="p">${pc}</div></td></tr>`).join('');
});

define('tv-details', `<style>
  :host { position: relative; background: #0f0f0f; padding: 10px 11px 0 15px; height: 166px; font-size: 11px; line-height: 19px; overflow: hidden; }
  header { display: flex; align-items: center; height: 24px; font-size: 13px; }
  header sym-badge { width: 21px; height: 21px; }
  header b { font-weight: 600; margin-left: 7px; flex: 1; }
  header button + button { margin-left: 10px; }
  p { margin: 0; }
  .t { margin-top: 9px; display: flex; align-items: center; gap: 3px; }
  .t tv-icon { width: 14px; height: 14px; color: #a0a0a0; }
  .g { color: #8c8c8c; }
  .price { display: flex; align-items: baseline; gap: 5px; margin-top: 11px; line-height: 28px; }
  .price b { font-size: 24px; font-weight: 600; color: #e2405f; }
  .chg { color: #2ba987; font-size: 14px; line-height: 18px; font-weight: 600; display: flex; gap: 7px; }
</style>
<header><sym-badge kind="gold"></sym-badge><b>X.</b><button aria-label="Vue"><tv-icon name="grid"></tv-icon></button><button aria-label="Note"><tv-icon name="edit"></tv-icon></button><button aria-label="Plus"><tv-icon name="dots"></tv-icon></button></header>
<p class="t"><a href="#">Or / Dollar Américain</a><tv-icon name="ext"></tv-icon>•</p><p>PEPPERSTONE</p><p class="g">Produit de base • Cfd</p>
<div class="price"><b>5\u2009010,37</b><span>USD</span></div><div class="chg"><span>+4,18</span><span>+0,08%</span></div>`);

define('tv-rail', `<style>
  :host { display: flex; flex-direction: column; align-items: center; background: #0f0f0f; padding: 1px 0; color: #cfcfcf; }
  button { position: relative; width: 40px; height: 40px; }
  .btm { display: flex; flex-direction: column; margin-top: auto; }
  .btm button { height: 39px; }
  .btm .app { height: 41px; }
  .on span { display: flex; align-items: center; justify-content: center; width: 33px; height: 33px; border-radius: 6px; background: #3a3a3a; }
  em { position: absolute; left: 15px; top: 2px; width: 20px; height: 15px; border-radius: 8px; background: #e0234a; color: #fff; font-style: normal; font-size: 12px; line-height: 15px; }
  .app span { display: flex; align-items: center; justify-content: center; width: 30px; height: 30px; border-radius: 50%; background: #f2f2f2; color: #000; }
  hr { width: 30px; height: 1px; margin: 4px 0; border: 0; background: #434343; }
</style>
<button class="on" aria-label="Liste"><span><tv-icon name="note"></tv-icon></span></button><button aria-label="Alertes"><tv-icon name="clock"></tv-icon><em>37</em></button><button aria-label="Objets"><tv-icon name="layers"></tv-icon></button><button aria-label="Discussions"><tv-icon name="chat"></tv-icon></button>
<div class="btm"><button aria-label="Screeners"><tv-icon name="radar"></tv-icon></button><button aria-label="Idées"><tv-icon name="idea"></tv-icon></button><button aria-label="Calendriers"><tv-icon name="cal"></tv-icon></button><button aria-label="Flux"><tv-icon name="rss"></tv-icon></button><button aria-label="Notifications"><tv-icon name="bell"></tv-icon></button><button class="app" aria-label="Produits"><span><tv-icon name="apps"></tv-icon></span></button></div>
<hr><button aria-label="Aide"><tv-icon name="help"></tv-icon></button>`);

define('tv-app', `<style>
  :host { display: flex; flex-direction: column; height: 100vh; background: #2e2e2e; overflow: hidden; border-radius: 8px; }
  .main { flex: 1; min-height: 0; display: grid; grid-template-columns: 46px minmax(0, 1fr) 217px; column-gap: 3px; margin-top: 3px; }
  .mid { display: flex; flex-direction: column; min-height: 0; }
  .mid tv-chart { flex: 1; min-height: 0; }
  .dock { display: grid; grid-template-columns: 176px 40px; column-gap: 1px; min-height: 0; }
  .side { position: relative; display: flex; flex-direction: column; gap: 3px; min-height: 0; }
  .side tv-watchlist { flex: 1; }
  .hide { position: absolute; left: -2px; bottom: 50px; width: 8px; height: 23px; border: 1px solid #3a3a3a; border-radius: 3px; background: #1e1e1e; overflow: hidden; font-size: 12px; }
</style>
<tv-tabs></tv-tabs><tv-topbar></tv-topbar>
<div class="main"><tv-tools></tv-tools><div class="mid"><tv-chart></tv-chart><tv-bottom></tv-bottom></div>
<div class="dock"><div class="side"><tv-watchlist></tv-watchlist><tv-details></tv-details><button class="hide" aria-label="Masquer le panneau">›</button></div><tv-rail></tv-rail></div></div>`);
</script>
</body>
</html>
